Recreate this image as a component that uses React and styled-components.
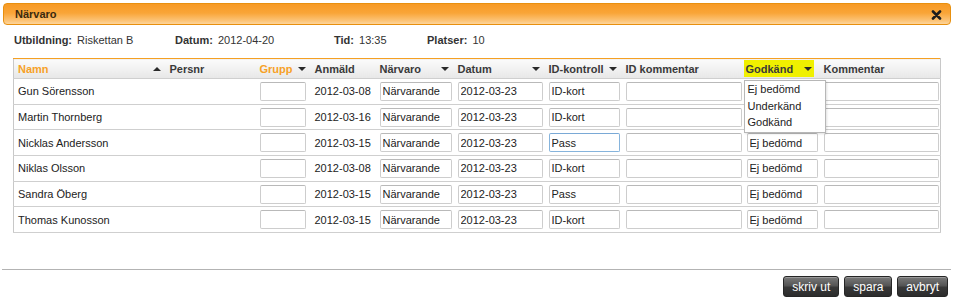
import React from 'react';
import styled, { createGlobalStyle } from 'styled-components';

const GlobalStyle = createGlobalStyle`
  html, body {
    margin: 0;
    padding: 0;
    background: #fff;
  }
  body {
    font-family: "Liberation Sans", Arial, sans-serif;
    font-size: 11px;
    color: #222;
  }
`;

/* column widths, left to right */
const COLS = [152, 90, 55, 65, 78, 91, 77, 121, 77, 121];

const ROWS = [
  { name: 'Gun Sörensson', anmald: '2012-03-08', id: 'ID-kort' },
  { name: 'Martin Thornberg', anmald: '2012-03-16', id: 'ID-kort' },
  { name: 'Nicklas Andersson', anmald: '2012-03-15', id: 'Pass', focus: true },
  { name: 'Niklas Olsson', anmald: '2012-03-08', id: 'ID-kort' },
  { name: 'Sandra Öberg', anmald: '2012-03-15', id: 'Pass' },
  { name: 'Thomas Kunosson', anmald: '2012-03-15', id: 'ID-kort' },
];

function App() {
  return (
    <Dialog>
      <GlobalStyle />
      <TitleBar>
        <Title>Närvaro</Title>
        <Close aria-label="stäng">
          <svg width="11" height="10" viewBox="0 0 11 10">
            <path d="M2 1.5 L9 8.5 M9 1.5 L2 8.5" stroke="#1e1e1e" strokeWidth="2.6" strokeLinecap="round" />
          </svg>
        </Close>
      </TitleBar>

      <Info>
        <InfoItem width={161}><b>Utbildning:</b> Riskettan B</InfoItem>
        <InfoItem width={159}><b>Datum:</b> 2012-04-20</InfoItem>
        <InfoItem width={93}><b>Tid:</b> 13:35</InfoItem>
        <InfoItem><b>Platser:</b> 10</InfoItem>
      </Info>

      <Table>
        <colgroup>
          {COLS.map((w, i) => (
            <col key={i} style={{ width: w }} />
          ))}
        </colgroup>
        <thead>
          <tr>
            <Th>
              <HeadCell>
                <HeadLabel active>Namn</HeadLabel>
                <Arrow up />
              </HeadCell>
            </Th>
            <Th><HeadCell><HeadLabel>Persnr</HeadLabel></HeadCell></Th>
            <Th>
              <HeadCell>
                <HeadLabel active>Grupp</HeadLabel>
                <Arrow />
              </HeadCell>
            </Th>
            <Th><HeadCell><HeadLabel>Anmäld</HeadLabel></HeadCell></Th>
            <Th>
              <HeadCell>
                <HeadLabel>Närvaro</HeadLabel>
                <Arrow />
              </HeadCell>
            </Th>
            <Th>
              <HeadCell>
                <HeadLabel>Datum</HeadLabel>
                <Arrow />
              </HeadCell>
            </Th>
            <Th>
              <HeadCell>
                <HeadLabel>ID-kontroll</HeadLabel>
                <Arrow />
              </HeadCell>
            </Th>
            <Th><HeadCell><HeadLabel>ID kommentar</HeadLabel></HeadCell></Th>
            <Th>
              <HeadCell highlight>
                <HeadLabel>Godkänd</HeadLabel>
                <Arrow />
              </HeadCell>
            </Th>
            <Th><HeadCell><HeadLabel>Kommentar</HeadLabel></HeadCell></Th>
          </tr>
        </thead>
        <tbody>
          {ROWS.map((r, i) => (
            <tr key={r.name}>
              <Td>{r.name}</Td>
              <Td />
              <Td><Field width={46} readOnly value="" /></Td>
              <Td>{r.anmald}</Td>
              <Td><Field width={72} readOnly value="Närvarande" /></Td>
              <Td><Field width={85} readOnly value="2012-03-23" /></Td>
              <Td><Field width={71} readOnly value={r.id} focus={r.focus} /></Td>
              <Td><Field width={116} readOnly value="" /></Td>
              <Td>
                <Field width={71} readOnly value="Ej bedömd" />
                {i === 0 && (
                  <Dropdown>
                    <Option>Ej bedömd</Option>
                    <Option>Underkänd</Option>
                    <Option>Godkänd</Option>
                  </Dropdown>
                )}
              </Td>
              <Td><Field width={115} readOnly value="" /></Td>
            </tr>
          ))}
        </tbody>
      </Table>

      <Footer>
        <Button>skriv ut</Button>
        <Button>spara</Button>
        <Button>avbryt</Button>
      </Footer>
    </Dialog>
  );
}

const Dialog = styled.div`
  width: 954px;
  height: 305px;
  padding-top: 3px;
  box-sizing: border-box;
  overflow: hidden;
`;

const TitleBar = styled.div`
  display: flex;
  align-items: center;
  justify-content: space-between;
  height: 20px;
  margin: 0 3px 0 3px;
  padding: 0 8px 0 11px;
  border: 1px solid #e8900f;
  border-radius: 4px;
  background: linear-gradient(to bottom, #f79a24 0%, #f9a538 45%, #fcc57a 85%, #fdd59c 100%);
`;

const Title = styled.span`
  font-weight: bold;
  font-size: 11px;
  color: #3a2a10;
`;

const Close = styled.span`
  display: flex;
  align-items: center;
  margin-top: 1px;
`;

const Info = styled.div`
  display: flex;
  align-items: center;
  height: 30px;
  padding-left: 14px;
  color: #333;
  b {
    font-weight: bold;
    margin-right: 2px;
  }
`;

const InfoItem = styled.span`
  width: ${(p) => (p.width ? `${p.width}px` : 'auto')};
  white-space: nowrap;
`;

const Table = styled.table`
  margin: 3px 0 0 13px;
  width: 928px;
  table-layout: fixed;
  border-collapse: collapse;
  border: 1px solid #c8c8c8;
  border-top: 1px solid #f5a023;
`;

const Th = styled.th`
  height: 19px;
  padding: 0;
  text-align: left;
  background: linear-gradient(to bottom, #fbfbfb, #e7e7e7);
  border-bottom: 1px solid #cfcfcf;
`;

const HeadCell = styled.div`
  display: flex;
  align-items: center;
  justify-content: space-between;
  height: 17px;
  margin: 0 4px 0 ${(p) => (p.highlight ? '1px' : '4px')};
  padding: ${(p) => (p.highlight ? '0 1px 0 2px' : '0')};
  width: ${(p) => (p.highlight ? '67px' : 'auto')};
  background: ${(p) => (p.highlight ? '#f0f000' : 'transparent')};
`;

const HeadLabel = styled.span`
  font-weight: bold;
  font-size: 11px;
  color: ${(p) => (p.active ? '#f7a127' : '#3a3a3a')};
  white-space: nowrap;
`;

const Arrow = styled.span`
  width: 0;
  height: 0;
  margin-right: 1px;
  border-left: 4px solid transparent;
  border-right: 4px solid transparent;
  ${(p) =>
    p.up
      ? 'border-bottom: 4px solid #2a2a2a;'
      : 'border-top: 4px solid #2a2a2a;'}
`;

const Td = styled.td`
  position: relative;
  height: 24.7px;
  padding: 0 0 0 4px;
  border-bottom: 1px solid #cfcfcf;
  white-space: nowrap;
  color: #222;
`;

const Field = styled.input`
  display: block;
  box-sizing: border-box;
  width: ${(p) => p.width}px;
  height: 19px;
  margin: 0;
  padding: 0 2px;
  font-family: "Liberation Sans", Arial, sans-serif;
  font-size: 11px;
  color: #222;
  background: #fff;
  border: 1px solid ${(p) => (p.focus ? '#86b4dc' : '#cdcdcd')};
  border-top-color: ${(p) => (p.focus ? '#7aa9d6' : '#b9b9b9')};
  border-radius: 2px;
  outline: none;
`;

const Dropdown = styled.div`
  position: absolute;
  left: 1px;
  top: 1px;
  z-index: 2;
  width: 80px;
  padding: 0 0 1px;
  background: #fff;
  border: 1px solid #b7b7b7;
  box-shadow: 1px 1px 2px rgba(0, 0, 0, 0.12);
`;

const Option = styled.div`
  height: 16.5px;
  line-height: 16.5px;
  padding-left: 3px;
  color: #222;
`;

const Footer = styled.div`
  display: flex;
  justify-content: flex-end;
  gap: 5px;
  margin: 36px 3px 0 2px;
  padding: 6px 3px 0 0;
  border-top: 1px solid #b3b3b3;
`;

const Button = styled.button`
  height: 21px;
  padding: 0 8px;
  font-family: "Liberation Sans", Arial, sans-serif;
  font-size: 12px;
  color: #fff;
  background: linear-gradient(to bottom, #7a7a7a 0%, #555 45%, #383838 55%, #2c2c2c 100%);
  border: 1px solid #262626;
  border-radius: 3px;
  box-shadow: inset 0 1px 0 rgba(255, 255, 255, 0.25);
  cursor: pointer;
`;

export default App;
